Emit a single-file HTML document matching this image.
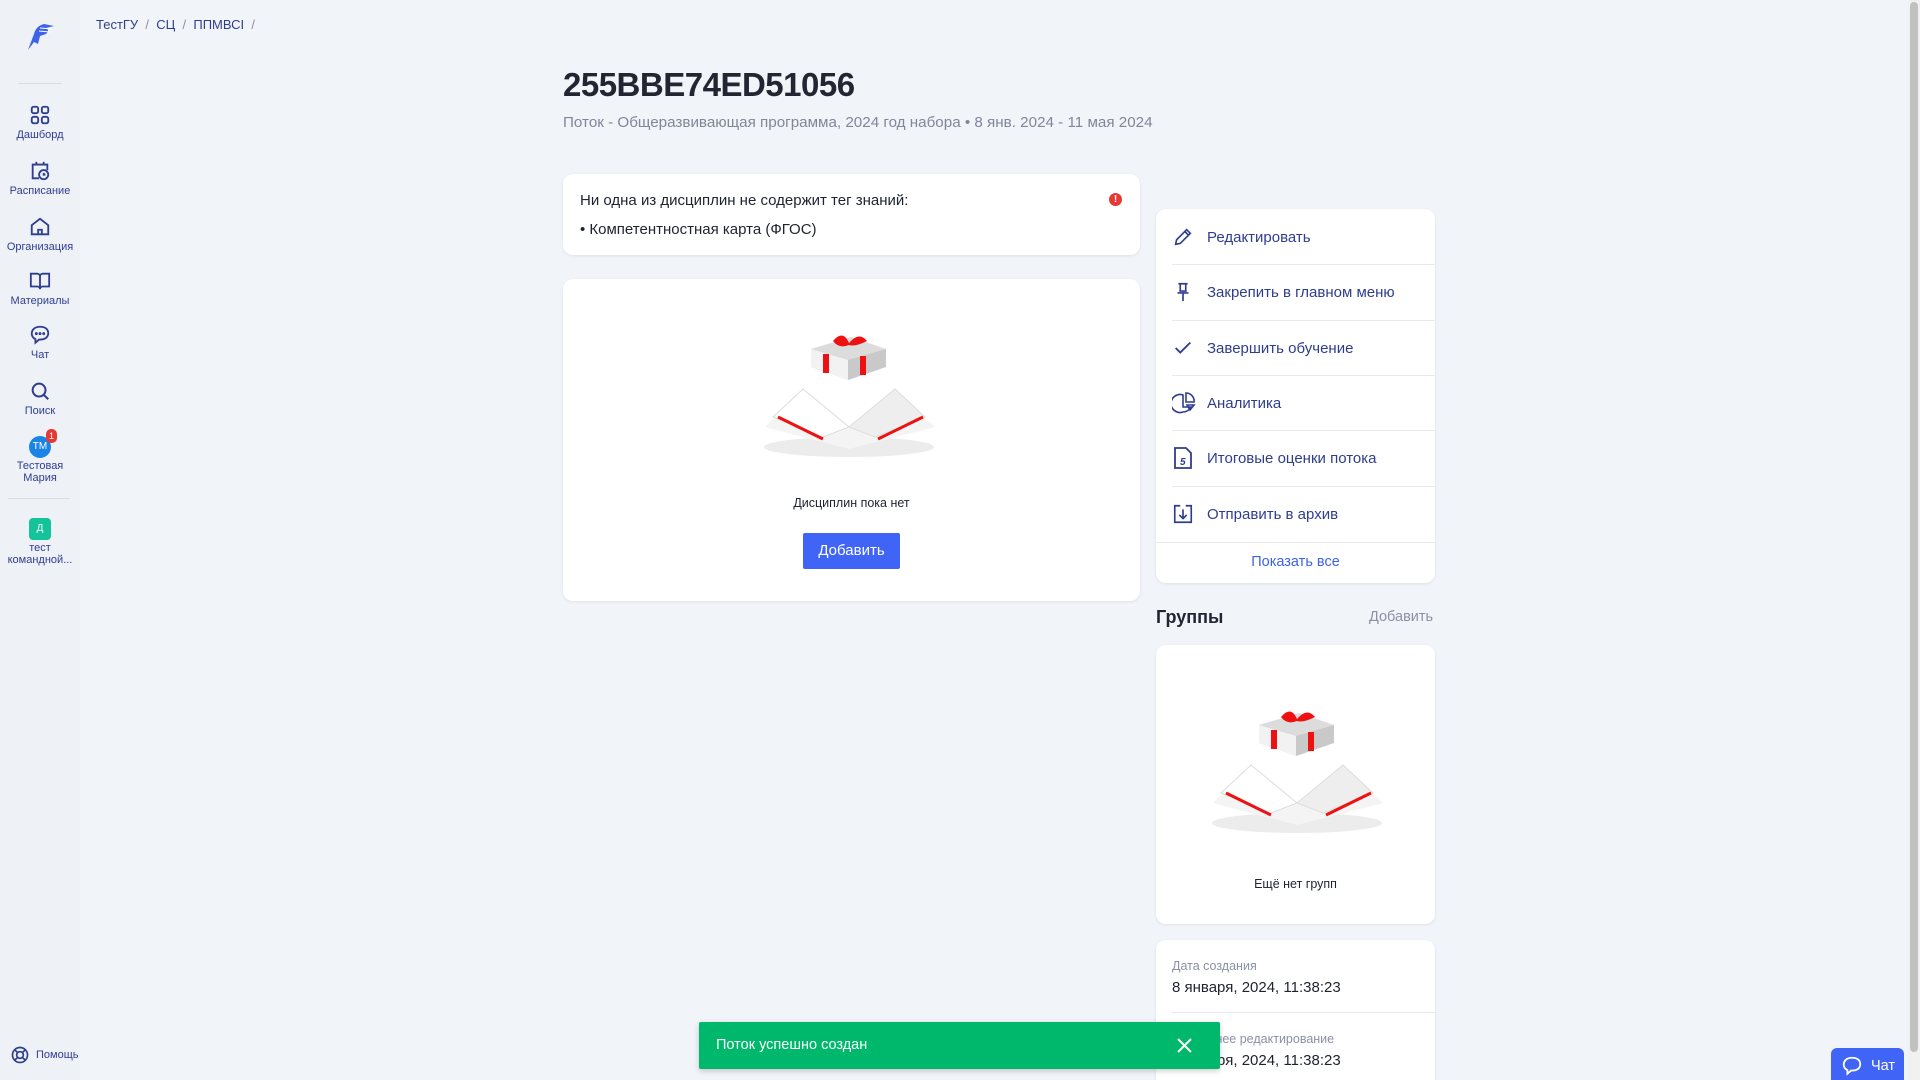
<!DOCTYPE html>
<html style="width:1920px;height:1080px;overflow:hidden"><head><meta charset="utf-8"><style>
*{box-sizing:border-box;margin:0;padding:0}
body{width:1920px;height:1080px;overflow:hidden;background:#f1f4f8;font-family:"Liberation Sans","Noto Sans CJK SC",sans-serif;position:relative;color:#1f2330}
.sb{position:absolute;left:0;top:0;width:80px;height:1080px;background:#eef2f7}
.si{position:absolute;left:0;width:80px;text-align:center;color:#2f3d8f;font-size:11px;line-height:12px}
.si svg{display:block;margin:0 auto 3px}
.abs{position:absolute}
.card{position:absolute;background:#fff;border-radius:10px;box-shadow:0 1px 3px rgba(0,0,0,.08)}
.mi{position:absolute;left:0;width:279px;height:56px;display:flex;align-items:center;color:#2f3d8f;font-size:15px}
.mi svg{position:absolute;left:16px}
.mi span{position:absolute;left:51px}
.dv{position:absolute;left:16px;right:0;height:1px;background:#e6e9ef}
</style></head><body>
<div class="sb">
 <svg class="abs" style="left:24px;top:20px" width="32" height="32" viewBox="0 0 32 32"><path d="M4 30 L10 14 Q12 6 20 4 L30 6 L22 8 Q26 10 22 14 L16 16 L14 24 L10 22 Z" fill="#3d63e8"/><path d="M16 8 L28 9 M15 11 L26 12" stroke="#fff" stroke-width="1"/></svg>
 <div class="abs" style="left:18px;top:83px;width:44px;height:1px;background:#d8dee8"></div>
 <div class="si" style="top:104px"><svg width="22" height="22" viewBox="0 0 24 24" fill="none" stroke="#2f3d8f" stroke-width="2"><rect x="3" y="3" width="7" height="7" rx="2"/><rect x="14" y="3" width="7" height="7" rx="2"/><rect x="3" y="14" width="7" height="7" rx="2"/><rect x="14" y="14" width="7" height="7" rx="2"/></svg>Дашборд</div>
 <div class="si" style="top:160px"><svg width="22" height="22" viewBox="0 0 24 24" fill="none" stroke="#2f3d8f" stroke-width="2"><path d="M11 20H4V5h16v6M8 2v4M16 2v4"/><circle cx="16" cy="16" r="5"/><path d="M16 14v2h2"/></svg>Расписание</div>
 <div class="si" style="top:216px"><svg width="22" height="22" viewBox="0 0 24 24" fill="none" stroke="#2f3d8f" stroke-width="2"><path d="M3 20V10l9-7 9 7v10zM10 20v-5h4v5"/></svg>Организация</div>
 <div class="si" style="top:270px"><svg width="22" height="22" viewBox="0 0 24 24" fill="none" stroke="#2f3d8f" stroke-width="2"><path d="M2 4h7a3 3 0 013 3v14a3 3 0 00-3-3H2zM22 4h-7a3 3 0 00-3 3v14a3 3 0 013-3h7z"/></svg>Материалы</div>
 <div class="si" style="top:324px"><svg width="22" height="22" viewBox="0 0 24 24" fill="none" stroke="#2f3d8f" stroke-width="2"><path d="M12 3C6 3 3 6.5 3 10.5c0 3 2 5 4 6v4l4-3.5h1c6 0 9-3 9-7S18 3 12 3z"/><circle cx="8" cy="10.5" r=".6" fill="#2f3d8f"/><circle cx="12" cy="10.5" r=".6" fill="#2f3d8f"/><circle cx="16" cy="10.5" r=".6" fill="#2f3d8f"/></svg>Чат</div>
 <div class="si" style="top:380px"><svg width="22" height="22" viewBox="0 0 24 24" fill="none" stroke="#2f3d8f" stroke-width="2.2"><circle cx="11" cy="11" r="7"/><path d="M16 16l5 5"/></svg>Поиск</div>
 <div class="si" style="top:436px"><div style="width:22px;height:22px;border-radius:50%;background:#1a83e6;color:#fff;font-size:10px;line-height:22px;margin:0 auto 2px;position:relative">ТМ<span style="position:absolute;right:-6px;top:-7px;width:11px;height:14px;background:#e53935;border-radius:5px;font-size:9px;line-height:14px">1</span></div>Тестовая<br>Мария</div>
 <div class="abs" style="left:8px;top:498px;width:62px;height:1px;background:#d8dee8"></div>
 <div class="si" style="top:518px"><div style="width:22px;height:22px;border-radius:4px;background:#15c39a;color:#fff;font-size:10px;line-height:22px;margin:0 auto 2px">Д</div>тест<br>командной...</div>
 <div class="abs" style="left:10px;top:1045px;font-size:11px;color:#2f3d8f;display:flex;align-items:center;gap:6px"><svg width="20" height="20" viewBox="0 0 24 24" fill="none" stroke="#2f3d8f" stroke-width="2"><circle cx="12" cy="12" r="9"/><circle cx="12" cy="12" r="4"/><path d="M5.6 5.6l3.6 3.6M18.4 5.6l-3.6 3.6M5.6 18.4l3.6-3.6M18.4 18.4l-3.6-3.6"/></svg>Помощь</div>
</div>
<div class="abs" style="left:96px;top:17px;font-size:13px;color:#2f3d8f">ТестГУ &nbsp;<span style="color:#8a91a5">/</span>&nbsp; СЦ &nbsp;<span style="color:#8a91a5">/</span>&nbsp; ППМВСI &nbsp;<span style="color:#8a91a5">/</span></div>
<div class="abs" style="left:563px;top:66px;font-size:33px;font-weight:bold;color:#222632;letter-spacing:-.5px">255BBE74ED51056</div>
<div class="abs" style="left:563px;top:114px;font-size:15.2px;color:#7f8799">Поток - Общеразвивающая программа, 2024 год набора • 8 янв. 2024 - 11 мая 2024</div>
<div class="card" style="left:563px;top:174px;width:577px;height:81px">
 <div class="abs" style="left:17px;top:18px;font-size:15px">Ни одна из дисциплин не содержит тег знаний:</div>
 <div class="abs" style="left:17px;top:47px;font-size:15px">• Компетентностная карта (ФГОС)</div>
 <div class="abs" style="left:546px;top:19px;width:13px;height:13px;border-radius:50%;background:#e53935;color:#fff;font-size:10px;line-height:13px;text-align:center;font-weight:bold">!</div>
</div>
<div class="card" style="left:563px;top:279px;width:577px;height:322px">
 <svg class="abs" style="left:200px;top:48px" width="175" height="130" viewBox="0 0 175 130"><polygon points="48,22 88,10 123,22 123,40 85,53 48,40" fill="#dcdcdc"/><polygon points="48,22 85,33 85,53 48,40" fill="#f2f2f2"/><polygon points="85,33 123,22 123,40 85,53" fill="#c9c9c9"/><path d="M63,27 L63,46 M100,29 L100,48" stroke="#e11" stroke-width="6"/><path d="M70,14 Q80,2 86,16 Q96,4 104,14 Q92,20 86,18 Q76,22 70,14Z" fill="#e11"/><ellipse cx="86" cy="120" rx="85" ry="10" fill="#ececec"/><polygon points="2,100 40,62 86,100 132,62 172,100 86,122" fill="#f4f4f4"/><polygon points="40,62 86,100 60,110 10,90" fill="#fff" stroke="#ddd"/><polygon points="132,62 86,100 112,110 162,90" fill="#eee" stroke="#ddd"/><path d="M15,90 L60,112 M160,90 L115,112" stroke="#e11" stroke-width="3"/></svg>
 <div class="abs" style="left:0;width:577px;top:217px;text-align:center;font-size:12.5px">Дисциплин пока нет</div>
 <div class="abs" style="left:240px;top:254px;width:97px;height:36px;background:#4064f5;border-radius:2px;color:#fff;font-size:15px;line-height:36px;text-align:center">Добавить</div>
</div>
<div class="card" style="left:1156px;top:209px;width:279px;height:374px">
 <div class="mi" style="top:0"><svg width="22" height="22" viewBox="0 0 24 24" fill="none" stroke="#2f3d8f" stroke-width="1.8"><path d="M4 20l1-5L16 4l4 4L9 19zM14 6l4 4"/></svg><span>Редактировать</span></div>
 <div class="dv" style="top:55px"></div>
 <div class="mi" style="top:55px"><svg width="22" height="22" viewBox="0 0 24 24" fill="none" stroke="#2f3d8f" stroke-width="1.8"><path d="M7 3h10M9 3v8M15 3v8M6 13h12M12 13v9M8 11h8"/></svg><span>Закрепить в главном меню</span></div>
 <div class="dv" style="top:111px"></div>
 <div class="mi" style="top:111px"><svg width="22" height="22" viewBox="0 0 24 24" fill="none" stroke="#2f3d8f" stroke-width="2"><path d="M4 12l5 5L20 6"/></svg><span>Завершить обучение</span></div>
 <div class="dv" style="top:166px"></div>
 <div class="mi" style="top:166px"><svg width="24" height="24" viewBox="0 0 24 24" fill="none" stroke="#2f3d8f" stroke-width="1.6"><path d="M11 4a9 9 0 100 17 9 9 0 008-5h-8zM14 2v9h8a8 8 0 00-8-9zM15 14h7l-4 5z"/></svg><span>Аналитика</span></div>
 <div class="dv" style="top:221px"></div>
 <div class="mi" style="top:221px"><svg width="22" height="24" viewBox="0 0 22 24" fill="none" stroke="#2f3d8f" stroke-width="1.8"><path d="M3 2h11l5 5v15H3z"/><text x="8" y="19" font-size="10" fill="#2f3d8f" stroke="none" font-weight="bold" font-style="italic">5</text></svg><span>Итоговые оценки потока</span></div>
 <div class="dv" style="top:277px"></div>
 <div class="mi" style="top:277px"><svg width="22" height="22" viewBox="0 0 24 24" fill="none" stroke="#2f3d8f" stroke-width="1.8"><path d="M3 8V3h6M21 8V3h-6M3 8v13h18V8M12 7v9M8 13l4 4 4-4"/></svg><span>Отправить в архив</span></div>
 <div class="dv" style="top:333px;left:0"></div>
 <div class="abs" style="top:333px;left:0;width:279px;height:41px;line-height:41px;text-align:center;color:#3d63e8;font-size:14.5px">Показать все</div>
</div>
<div class="abs" style="left:1156px;top:607px;font-size:18px;font-weight:bold;color:#222632">Группы</div>
<div class="abs" style="left:1369px;top:609px;font-size:14.5px;color:#8a91a5">Добавить</div>
<div class="card" style="left:1156px;top:645px;width:279px;height:279px">
 <svg class="abs" style="left:55px;top:58px" width="175" height="130" viewBox="0 0 175 130"><polygon points="48,22 88,10 123,22 123,40 85,53 48,40" fill="#dcdcdc"/><polygon points="48,22 85,33 85,53 48,40" fill="#f2f2f2"/><polygon points="85,33 123,22 123,40 85,53" fill="#c9c9c9"/><path d="M63,27 L63,46 M100,29 L100,48" stroke="#e11" stroke-width="6"/><path d="M70,14 Q80,2 86,16 Q96,4 104,14 Q92,20 86,18 Q76,22 70,14Z" fill="#e11"/><ellipse cx="86" cy="120" rx="85" ry="10" fill="#ececec"/><polygon points="2,100 40,62 86,100 132,62 172,100 86,122" fill="#f4f4f4"/><polygon points="40,62 86,100 60,110 10,90" fill="#fff" stroke="#ddd"/><polygon points="132,62 86,100 112,110 162,90" fill="#eee" stroke="#ddd"/><path d="M15,90 L60,112 M160,90 L115,112" stroke="#e11" stroke-width="3"/></svg>
 <div class="abs" style="left:0;width:279px;top:232px;text-align:center;font-size:12.5px">Ещё нет групп</div>
</div>
<div class="card" style="left:1156px;top:940px;width:279px;height:150px;border-radius:10px 10px 0 0">
 <div class="abs" style="left:16px;top:19px;font-size:12.5px;color:#8a91a5">Дата создания</div>
 <div class="abs" style="left:16px;top:39px;font-size:15px">8 января, 2024, 11:38:23</div>
 <div class="dv" style="top:72px"></div>
 <div class="abs" style="left:16px;top:92px;font-size:12.5px;color:#8a91a5">Последнее редактирование</div>
 <div class="abs" style="left:16px;top:112px;font-size:15px">8 января, 2024, 11:38:23</div>
</div>
<div class="abs" style="left:699px;top:1022px;width:521px;height:47px;background:#00b86b;border-radius:2px;box-shadow:0 2px 6px rgba(0,0,0,.2);color:#fff;font-size:14.5px;line-height:47px;padding-left:17px">Поток успешно создан<svg class="abs" style="right:28px;top:16px" width="15" height="15" viewBox="0 0 15 15" stroke="#fff" stroke-width="2"><path d="M1 1l13 13M14 1L1 14"/></svg></div>
<div class="abs" style="left:1831px;top:1048px;width:73px;height:40px;background:#4064f5;border-radius:6px;color:#fff;font-size:14.5px;padding:10px 0 0 40px">Чат<svg class="abs" style="left:10px;top:7px" width="22" height="22" viewBox="0 0 24 24" fill="none" stroke="#fff" stroke-width="2"><path d="M12 3C6 3 3 6.5 3 10.5c0 3 2 5 4 6v4l4-3.5h1c6 0 9-3 9-7S18 3 12 3z"/></svg></div>
<div class="abs" style="left:1908px;top:0;width:12px;height:1080px;background:#f1f1f1"><div style="margin:2px 2px;width:8px;height:1050px;background:#c1c1c1;border-radius:4px"></div></div>
</body></html>
